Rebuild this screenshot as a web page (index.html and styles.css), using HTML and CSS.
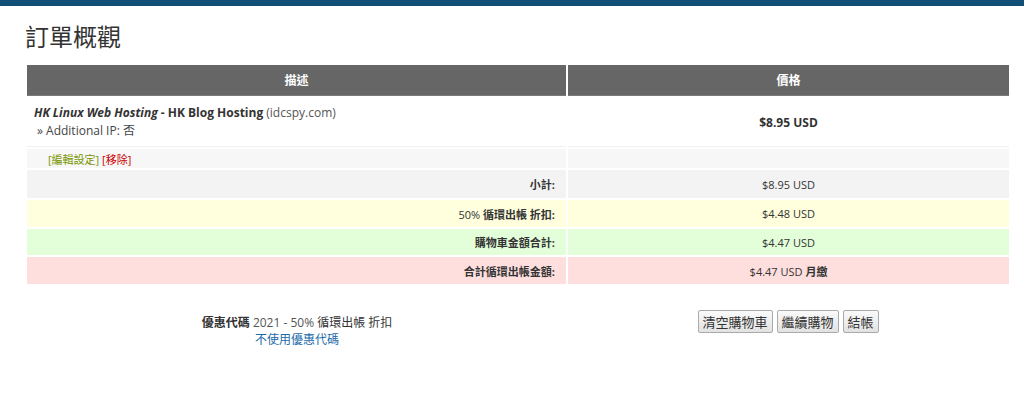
FILE: index.html
```html
<!DOCTYPE html>
<html lang="zh-Hant">
  <head>
    <meta charset="UTF-8" />
    <meta name="viewport" content="width=device-width, initial-scale=1.0" />
    <title>訂單概觀</title>
    <link rel="stylesheet" href="styles.css">
  </head>
  <body>
    <div class="top-bar"></div>
    <div class="main">
      <h1>訂單概觀</h1>
      <table class="cart">
        <tr class="head">
          <th class="col-desc">描述</th>
          <th>價格</th>
        </tr>
        <tr class="product">
          <td class="desc">
            <strong><em>HK Linux Web Hosting</em> - HK Blog Hosting</strong> <span class="domain">(idcspy.com)</span><br />
            <span class="option">&raquo; Additional IP: 否</span>
          </td>
          <td class="price"><strong>$8.95 USD</strong></td>
        </tr>
        <tr class="actions">
          <td><a href="#" class="edit">[編輯設定]</a> <a href="#" class="remove">[移除]</a></td>
          <td></td>
        </tr>
        <tr class="total sub">
          <td class="label">小計:</td>
          <td class="amount">$8.95 USD</td>
        </tr>
        <tr class="total discount">
          <td class="label"><span class="normal">50%</span> 循環出帳 折扣:</td>
          <td class="amount">$4.48 USD</td>
        </tr>
        <tr class="total due">
          <td class="label">購物車金額合計:</td>
          <td class="amount">$4.47 USD</td>
        </tr>
        <tr class="total recurring">
          <td class="label">合計循環出帳金額:</td>
          <td class="amount">$4.47 USD <strong>月繳</strong></td>
        </tr>
      </table>

      <div class="bottom">
        <div class="promo">
          <strong>優惠代碼</strong> <span class="promo-code">2021 - 50%</span> 循環出帳 折扣<br />
          <a href="#">不使用優惠代碼</a>
        </div>
        <div class="buttons">
          <button>清空購物車</button>
          <button>繼續購物</button>
          <button>結帳</button>
        </div>
      </div>
    </div>
  </body>
</html>
```

FILE: styles.css
```css
body {
  margin: 0;
  background-color: white;
  color: #333;
  font-family: "Open Sans", "Noto Sans CJK TC", sans-serif;
  font-size: 12px;
}
.top-bar {
  height: 6px;
  background-color: #124f76;
}
.main {
  padding: 0 13px 0 25px;
}
h1 {
  margin: 16px 0 11px 0;
  font-size: 24px;
  font-weight: normal;
  line-height: 30px;
  color: #333;
}
.cart {
  width: 100%;
  border-collapse: separate;
  border-spacing: 2px;
}
.cart th {
  background-color: #666;
  color: white;
  font-size: 12px;
  font-weight: bold;
  height: 30px;
  padding: 0;
  border-bottom: 1px solid #7a7a7a;
}
.col-desc {
  width: 55%;
}
.product td {
  height: 48px;
  padding: 0 7px;
  background-color: white;
  border-bottom: 1px solid #f0f0f0;
}
.desc {
  font-size: 12px;
  line-height: 18px;
}
.domain {
  color: #555;
}
.option {
  padding-left: 3px;
  color: #444;
}
.price {
  text-align: center;
}
.actions td {
  height: 19px;
  padding: 0 0 0 21px;
  background-color: #f7f7f7;
  font-size: 11px;
}
a {
  text-decoration: none;
}
.edit {
  color: #779500;
}
.remove {
  color: #cc0000;
}
.total td {
  height: 27px;
  padding: 0 11px;
  font-size: 11px;
}
.total .label {
  text-align: right;
  font-weight: bold;
  color: #333;
}
.total .label .normal {
  font-weight: normal;
}
.total .amount {
  text-align: center;
}
.sub td {
  height: 28px;
  background-color: #f3f3f3;
}
.discount td {
  background-color: #ffffdd;
}
.due td {
  height: 26px;
  background-color: #e3ffda;
}
.recurring td {
  background-color: #ffdede;
}
.bottom {
  display: flex;
  margin-top: 24px;
  padding: 0 2px;
}
.promo {
  width: 55%;
  padding-top: 4px;
  text-align: center;
  font-size: 12px;
  line-height: 17px;
}
.promo-code {
  color: #555;
}
.promo a {
  color: #1a6aa8;
}
.buttons {
  flex: 1;
  display: flex;
  justify-content: center;
  align-items: flex-start;
  gap: 4px;
}
.buttons button {
  font-family: "Noto Sans CJK TC", sans-serif;
  font-size: 13px;
  line-height: 18px;
  color: #333;
  height: 23px;
  padding: 0 4px;
  border: 1px solid #aaa;
  border-radius: 2px;
  background: linear-gradient(#fafafa, #e2e2e2);
}
```
